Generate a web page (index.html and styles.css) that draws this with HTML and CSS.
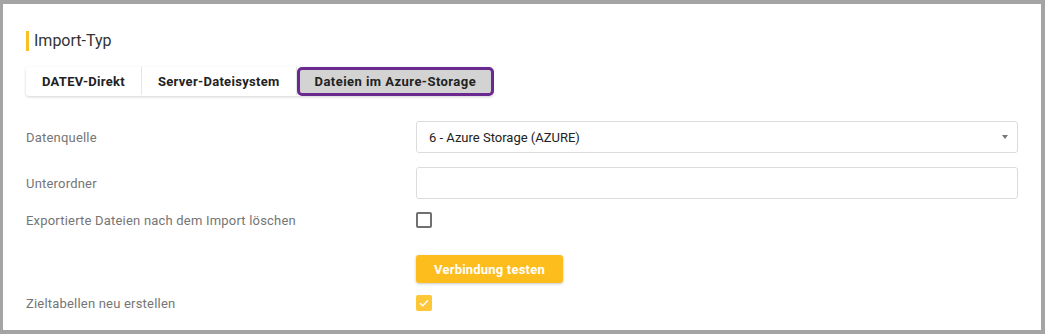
FILE: index.html
```html
<!DOCTYPE html>
<html>
<head>
  <meta name="viewport" content="width=device-width, initial-scale=1.0">
  <title>Import-Typ</title>
  <link rel="stylesheet" href="styles.css">
</head>
<body>

  <div class="panel">
    <h2 class="section-title">Import-Typ</h2>

    <!-- Import type tabs -->
    <div class="tabs">
      <button class="tab">DATEV-Direkt</button>
      <button class="tab">Server-Dateisystem</button>
      <button class="tab selected">Dateien im Azure-Storage</button>
    </div>

    <!-- Azure settings -->
    <div class="form">
      <div class="row row-field">
        <label class="label">Datenquelle</label>
        <div class="select">
          <span>6 - Azure Storage (AZURE)</span>
          <span class="caret"></span>
        </div>
      </div>

      <div class="row row-field">
        <label class="label">Unterordner</label>
        <input class="text-input" type="text">
      </div>

      <div class="row row-check">
        <label class="label">Exportierte Dateien nach dem Import löschen</label>
        <span class="checkbox"></span>
      </div>

      <div class="row row-button">
        <span class="label"></span>
        <button class="primary-btn">Verbindung testen</button>
      </div>

      <div class="row row-check last">
        <label class="label">Zieltabellen neu erstellen</label>
        <span class="checkbox checked">
          <svg width="10" height="8" viewBox="0 0 10 8"><path d="M1 4.2 L3.8 6.8 L9 1.2" fill="none" stroke="#fff" stroke-width="1.4"/></svg>
        </span>
      </div>
    </div>
  </div>

</body>
</html>
```

FILE: styles.css
```css
* {
  box-sizing: border-box;
  margin: 0;
  padding: 0;
}

body {
  font-family: Roboto, "Liberation Sans", Arial, sans-serif;
  background-color: #a4a4a4;
  height: 334px;
  overflow: hidden;
  padding: 4px 4px 4px 3px;
}

.panel {
  background: white;
  height: 326px;
  padding: 27px 23px 0 23px;
}

/* Title */
.section-title {
  font-size: 16px;
  font-weight: 400;
  color: #333;
  line-height: 20px;
  border-left: 3px solid #fbbf24;
  padding-left: 5px;
}

/* Tabs */
.tabs {
  display: flex;
  margin-top: 16px;
  width: max-content;
  box-shadow: 0 1px 3px rgba(0, 0, 0, 0.18);
  border-radius: 3px;
}

.tab {
  font-family: inherit;
  font-size: 13px;
  font-weight: 700;
  letter-spacing: 0.3px;
  color: #222;
  background: white;
  border: none;
  border-right: 1px solid #e6e6e6;
  height: 28px;
  padding: 0 16px;
}

.tab:first-child {
  border-radius: 3px 0 0 3px;
}

.tab.selected {
  background: #d3d3d3;
  border: 3px solid #69298e;
  border-radius: 5px;
  padding: 0 15px;
  height: 29px;
  margin-right: -1px;
  letter-spacing: 0.45px;
}

/* Form */
.form {
  margin-top: 25px;
}

.row {
  display: flex;
  align-items: center;
}

.label {
  width: 390px;
  flex-shrink: 0;
  font-size: 13px;
  letter-spacing: 0.2px;
  color: #757575;
}

.row-field {
  height: 32px;
  margin-bottom: 14px;
}

.row-check {
  height: 16px;
  margin-bottom: 27px;
  margin-top: -1px;
}

.row-button {
  height: 28px;
  margin-bottom: 13px;
}

.select,
.text-input {
  flex: 1;
  height: 32px;
  border: 1px solid #dcdcdc;
  border-radius: 3px;
  background: white;
  font-family: inherit;
  font-size: 13px;
  color: #222;
}

.select {
  display: flex;
  align-items: center;
  justify-content: space-between;
  padding: 0 9px 0 12px;
}

.caret {
  width: 0;
  height: 0;
  border-left: 3.5px solid transparent;
  border-right: 3.5px solid transparent;
  border-top: 4px solid #777;
}

.checkbox {
  width: 16px;
  height: 16px;
  border: 2px solid #707070;
  border-radius: 2px;
  display: flex;
  align-items: center;
  justify-content: center;
}

.checkbox.checked {
  border: none;
  background: #fdc738;
}

.primary-btn {
  font-family: inherit;
  font-size: 13px;
  font-weight: 700;
  letter-spacing: 0.2px;
  color: white;
  background: #fdbd1d;
  border: none;
  border-radius: 3px;
  height: 28px;
  width: 147px;
  box-shadow: 0 1px 3px rgba(0, 0, 0, 0.22);
}
```
